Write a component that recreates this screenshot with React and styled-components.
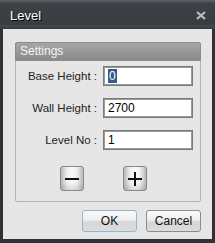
import React from "react";
import styled, { createGlobalStyle } from "styled-components";

const GlobalStyle = createGlobalStyle`
  html, body {
    margin: 0;
    padding: 0;
    background: #2f3237;
  }
  body {
    font-family: Tahoma, "DejaVu Sans", "Liberation Sans", sans-serif;
  }
`;

const Window = styled.div`
  width: 215px;
  height: 243px;
  display: flex;
  flex-direction: column;
  background: #2f3237;
  box-sizing: border-box;
`;

const TitleBar = styled.div`
  height: 29px;
  flex: none;
  display: flex;
  align-items: center;
  justify-content: space-between;
  padding: 0 9px 0 10px;
  box-sizing: border-box;
  background: linear-gradient(
    to bottom,
    #62666b 0px,
    #4a4d52 2px,
    #3d4045 4px,
    #393c41 24px,
    #45484d 26px,
    #393c41 28px
  );
`;

const Title = styled.span`
  color: #fff;
  font-family: "Liberation Sans", Arial, sans-serif;
  font-size: 13px;
  text-shadow: 1px 1px 0 #000;
  margin-top: 1px;
`;

const CloseIcon = styled.svg`
  width: 10px;
  height: 9px;
  margin-top: 1px;
`;

const Body = styled.div`
  flex: 1;
  margin: 0 3px 4px 3px;
  background: #e6e6e6;
  padding: 13px 11px 0 12px;
  display: flex;
  flex-direction: column;
`;

const Group = styled.div`
  border: 1px solid #b4b4b4;
  border-radius: 2px;
  height: 160px;
  box-sizing: border-box;
  display: flex;
  flex-direction: column;
`;

const GroupHeader = styled.div`
  height: 17px;
  margin: -1px -1px 0 -1px;
  background: linear-gradient(to bottom, #a6a6a6, #8a8a8a);
  border: 1px solid #8c8c8c;
  border-radius: 2px 2px 0 0;
  color: #f4f4f4;
  font-family: "Liberation Sans", Arial, sans-serif;
  font-size: 12px;
  line-height: 17px;
  padding-left: 4px;
`;

const Fields = styled.div`
  display: flex;
  flex-direction: column;
  gap: 12px;
  padding: 5px 7px 0 0;
`;

const Row = styled.div`
  display: grid;
  grid-template-columns: 87px 90px;
  align-items: center;
  height: 20px;
`;

const Label = styled.span`
  text-align: right;
  padding-right: 6px;
  color: #222;
  font-family: "Liberation Sans", Arial, sans-serif;
  font-size: 11.5px;
`;

const Field = styled.div`
  height: 20px;
  box-sizing: border-box;
  border: 1px solid #7a7a7a;
  box-shadow: inset 0 0 0 1px #9a9a9a;
  background: #fff;
  display: flex;
  align-items: center;
  padding-left: 4px;
  color: #000;
  font-family: "Liberation Sans", Arial, sans-serif;
  font-size: 12px;
`;

const Selected = styled.span`
  background: #3a5a8c;
  color: #fff;
  line-height: 14px;
  padding: 0 1px;
`;

const StepRow = styled.div`
  display: flex;
  gap: 39px;
  padding: 16px 0 0 44px;
`;

const StepButton = styled.div`
  width: 24px;
  height: 25px;
  box-sizing: border-box;
  border: 1px solid #8a8a8a;
  border-radius: 3px;
  background: linear-gradient(
    to right,
    #bdbdbd 0%,
    #f2f2f2 30%,
    #f8f8f8 50%,
    #f2f2f2 70%,
    #bdbdbd 100%
  );
  display: flex;
  align-items: center;
  justify-content: center;
  box-shadow: inset 0 -6px 6px -3px rgba(0, 0, 0, 0.15);
`;

const Footer = styled.div`
  display: flex;
  justify-content: flex-end;
  gap: 9px;
  padding: 8px 0 0 0;
`;

const DialogButton = styled.div`
  width: 55px;
  height: 22px;
  box-sizing: border-box;
  border: 1px solid ${(p) => (p.$default ? "#8fb6d6" : "#8c8c8c")};
  border-radius: 3px;
  background: linear-gradient(to bottom, #fbfbfb 0%, #eeeeee 45%, #d6d6d6 55%, #dcdcdc 100%);
  display: flex;
  align-items: center;
  justify-content: center;
  color: #111;
  font-family: "Liberation Sans", Arial, sans-serif;
  font-size: 12px;
`;

function App() {
  return (
    <>
      <GlobalStyle />
      <Window>
        <TitleBar>
          <Title>Level</Title>
          <CloseIcon viewBox="0 0 10 9">
            <path d="M1 1 L9 8 M9 1 L1 8" stroke="#b9bcc0" strokeWidth="2.2" />
          </CloseIcon>
        </TitleBar>
        <Body>
          <Group>
            <GroupHeader>Settings</GroupHeader>
            <Fields>
              <Row>
                <Label>Base Height :</Label>
                <Field>
                  <Selected>0</Selected>
                </Field>
              </Row>
              <Row>
                <Label>Wall Height :</Label>
                <Field>2700</Field>
              </Row>
              <Row>
                <Label>Level No :</Label>
                <Field>1</Field>
              </Row>
            </Fields>
            <StepRow>
              <StepButton>
                <svg width="16" height="16" viewBox="0 0 16 16">
                  <path d="M1 8 H15" stroke="#111" strokeWidth="2" />
                </svg>
              </StepButton>
              <StepButton>
                <svg width="16" height="16" viewBox="0 0 16 16">
                  <path d="M1 8 H15 M8 1 V15" stroke="#111" strokeWidth="2" />
                </svg>
              </StepButton>
            </StepRow>
          </Group>
          <Footer>
            <DialogButton $default>OK</DialogButton>
            <DialogButton>Cancel</DialogButton>
          </Footer>
        </Body>
      </Window>
    </>
  );
}

export default App;
